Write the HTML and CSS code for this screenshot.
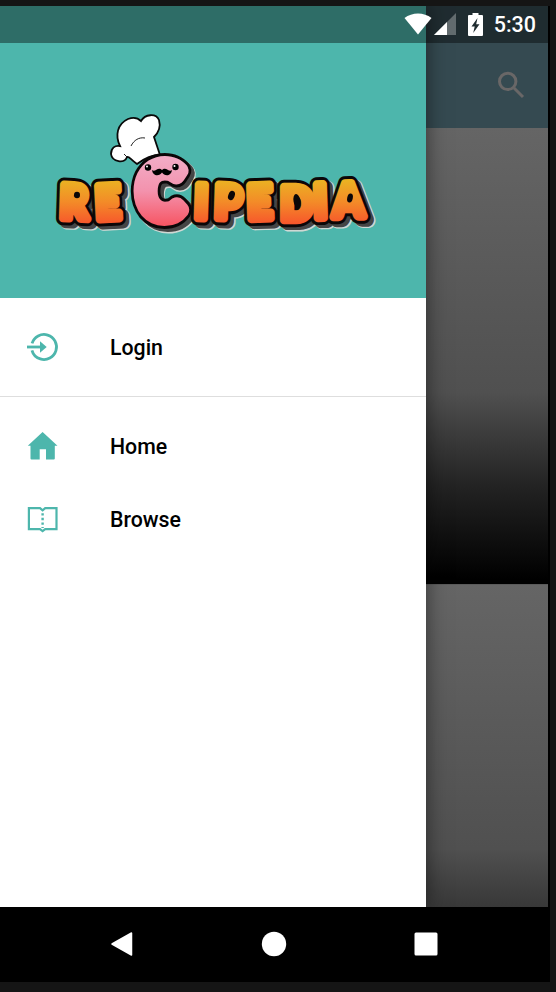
FILE: index.html
```html
<!DOCTYPE html>
<html lang="en">
<head>
<meta charset="utf-8">
<title>Recipedia</title>
<link rel="stylesheet" href="styles.css">
</head>
<body>
<div class="device">
  <div class="screen">
    <main class="app">
      <header class="appbar">
        <svg class="search" viewBox="0 0 28 28"><circle cx="10.7" cy="10.4" r="8.2"/><path d="M17 17l9 9"/></svg>
      </header>
      <div class="card card-first"></div>
      <div class="card card-second"></div>
    </main>
    <aside class="drawer">
      <div class="drawer-header">
        <svg class="logo" viewBox="40 105 350 140" role="img" aria-label="Recipedia">
          <defs>
            <linearGradient id="orange" gradientUnits="userSpaceOnUse" x1="0" y1="178" x2="0" y2="226">
              <stop offset="0" stop-color="#eab622"/><stop offset=".5" stop-color="#f38b28"/><stop offset="1" stop-color="#f7512c"/>
            </linearGradient>
            <linearGradient id="pink" gradientUnits="userSpaceOnUse" x1="0" y1="154" x2="0" y2="228">
              <stop offset="0" stop-color="#f2afc9"/><stop offset=".5" stop-color="#f392ad"/><stop offset="1" stop-color="#f7515e"/>
            </linearGradient>
            <g id="word" class="word" transform="scale(.93 1)">
              <text x="64 103.500" y="218 219.500" rotate="2 -3">RE</text>
              <text x="209 230.500 266.500 301.500 338 358.500" y="218 218 219 220 218 217" rotate="2 2 -2 0 -2 -1">IPEDIA</text>
            </g>
            <g id="initial" class="initial"><text x="138" y="218" textLength="45" lengthAdjust="spacingAndGlyphs">C</text></g>
          </defs>
          <use href="#word" class="halo" x="4.5" y="4"/>
          <use href="#initial" class="halo big" x="4" y="3.5"/>
          <use href="#word" class="shadow" x="3.5" y="3.2"/>
          <use href="#initial" class="shadow big" x="3.5" y="3"/>
          <use href="#word" class="outline"/>
          <use href="#word" class="orange"/>
          <g class="counters">
            <ellipse cx="77" cy="195" rx="3" ry="3.300"/>
            <ellipse cx="231.500" cy="195.500" rx="3.200" ry="4.800" transform="rotate(20 231.500 195.500)"/>
            <ellipse cx="297" cy="201" rx="3.500" ry="7" transform="rotate(-10 297 201)"/>
            <ellipse cx="350" cy="198" rx="2.800" ry="4.500" transform="rotate(12 350 198)"/>
          </g>
          <path class="hat" d="M137 164C130 159 129 156 127 157C125 164 112 162 111 154C111 148 115 145 120 146C115 136 117 124 128 119C133 117 138 118 141 121C145 114 156 113 159 120C161 127 158 133 154 137L160 155C151 155 145 158 137 164Z"/>
          <path class="crease" d="M131 146C134 140 139 137 145 138M127 157L124 154"/>
          <use href="#initial" class="outline big"/>
          <use href="#initial" class="pink"/>
          <circle cx="148" cy="167.5" r="3.2"/><circle cx="175.5" cy="167" r="3.2"/>
          <circle class="shine" cx="147" cy="166.5" r="1"/><circle class="shine" cx="174.5" cy="166" r="1"/>
          <path d="M162 170C158 166 155 173 152 170C153 177 160 176 162 172.500C164 176 171 177 172 170C169 173 166 166 162 170Z"/>
        </svg>
      </div>
      <nav class="menu">
        <div class="item">
          <svg class="icon" viewBox="0 0 32 32"><circle class="line" cx="17" cy="16" r="12.5" stroke-dasharray="71 7.54" transform="rotate(197 17 16)"/><path class="line" d="M0 16H14"/><path d="M13 10.2L19.7 16L13 21.8Z"/></svg>
          <span>Login</span>
        </div>
      </nav>
      <nav class="menu divided">
        <div class="item">
          <svg class="icon" viewBox="0 0 32 32"><path d="M15.6 2L30.5 15.7H27.8V28.5Q27.8 29.5 26.8 29.5H19V19.2H12.7V29.5H4.5Q3.5 29.5 3.5 28.5V15.7H.8Z"/></svg>
          <span>Home</span>
        </div>
        <div class="item">
          <svg class="icon" viewBox="0 0 32 32"><path class="line thin" d="M1.9 5.1H13L15.6 7.3L18.2 5.1H29.5V26.2H18.2L15.6 28.2L13 26.2H1.9Z"/><path class="line dots" d="M15.6 10.2V25"/></svg>
          <span>Browse</span>
        </div>
      </nav>
    </aside>
    <div class="statusbar">
      <svg class="wifi" viewBox="0 0 28 22"><path d="M.5 5C8 -1 20 -1 27.500 5L14 21.500Z"/></svg>
      <svg class="signal" viewBox="0 0 22 22"><path class="dim" d="M22 0V22H0Z"/><path d="M13 9V22H0Z"/></svg>
      <svg class="battery" viewBox="0 0 15 23"><path fill-rule="evenodd" d="M4.500 0H10.500V2H14Q15 2 15 3V22Q15 23 14 23H1Q0 23 0 22V3Q0 2 1 2H4.500ZM9.500 5L3.500 13.500H6.700L5.200 20L11.500 11.300H8.200Z"/></svg>
      <span class="clock">5:30</span>
    </div>
  </div>
  <div class="navbar">
    <svg viewBox="0 0 26 26"><path class="round" d="M3 13L22.500 2V24Z"/></svg>
    <svg viewBox="0 0 26 26"><circle cx="13" cy="13" r="12.200"/></svg>
    <svg viewBox="0 0 26 26"><rect x="1.500" y="1.500" width="23" height="23" rx="1.500"/></svg>
  </div>
</div>
</body>
</html>
```
FILE: styles.css
```css
* { box-sizing: border-box; }
body {
  margin: 0;
  height: 992px;
  padding-top: 6px;
  background: #151515;
  font-family: Roboto, "Liberation Sans", sans-serif;
  overflow: hidden;
}
svg { display: block; flex: none; }
.device { width: 550px; height: 976px; background: #000; }
.screen { position: relative; width: 548px; height: 901px; overflow: hidden; }
.app { display: flex; flex-direction: column; height: 100%; }
.appbar {
  flex: none;
  display: flex;
  justify-content: flex-end;
  height: 122px;
  padding: 65px 23px 0 0;
  background: #354a51;
}
.search { width: 28px; height: 28px; fill: none; stroke: #696767; stroke-width: 3; }
.card-first { height: 456px; background: linear-gradient(#656565 0, #505050 58%, #222 79%, #000 99%); }
.card-second { flex: 1; border-top: 1px solid #5a5a5a; background: linear-gradient(#656565, #505050 82%, #383838); }
.drawer {
  position: absolute;
  top: 0;
  left: 0;
  width: 426px;
  height: 100%;
  background: #fff;
  box-shadow: 0 0 20px rgba(0, 0, 0, .5);
}
.drawer-header { height: 292px; padding: 99px 0 0 40px; background: #4db6ac; }
.logo { width: 350px; height: 140px; }
.word { font: 900 46px Lato, sans-serif; }
.initial { font: 900 75px Lato, sans-serif; }
.halo { fill: #cfd8d4; stroke: #cfd8d4; stroke-width: 15; stroke-linejoin: round; }
.shadow { fill: #454545; stroke: #454545; stroke-width: 14; stroke-linejoin: round; }
.outline { fill: #0b0708; stroke: #0b0708; stroke-width: 14.500; stroke-linejoin: round; }
.big { stroke-width: 21; }
.halo.big { stroke-width: 22; }
.orange { fill: url(#orange); stroke: url(#orange); stroke-width: 8.500; stroke-linejoin: round; }
.pink { fill: url(#pink); stroke: url(#pink); stroke-width: 15; stroke-linejoin: round; }
.counters { fill: #0b0708; }
.hat { fill: #fff; stroke: #090909; stroke-width: 1.800; }
.crease { fill: none; stroke: #222; stroke-width: 1; }
.shine { fill: #fff; }
.menu { padding: 13px 0 12px; }
.divided { border-top: 1px solid #dedede; }
.item {
  display: flex;
  align-items: center;
  gap: 51px;
  height: 73px;
  padding-left: 27px;
  font-size: 21.300px;
  font-weight: 500;
  color: #000;
}
.icon { width: 32px; height: 32px; margin-bottom: 2px; fill: #4db6ac; }
.line { fill: none; stroke: #4db6ac; stroke-width: 2.800; }
.thin { stroke-width: 2.200; }
.dots { stroke-width: 2.400; stroke-dasharray: 2.400 2.200; }
.statusbar {
  position: absolute;
  top: 0;
  left: 0;
  display: flex;
  align-items: center;
  justify-content: flex-end;
  width: 100%;
  height: 36.500px;
  padding-right: 12px;
  background: rgba(0, 0, 0, .4);
  color: #fff;
  fill: #fff;
}
.wifi { width: 28px; height: 22px; margin-right: 2px; }
.signal { width: 22px; height: 22px; margin-right: 12px; }
.battery { width: 15px; height: 23px; margin-right: 11px; }
.dim { opacity: .3; }
.clock { padding-top: 2px; font-size: 21.500px; font-weight: 500; line-height: 36px; }
.navbar {
  display: flex;
  align-items: center;
  justify-content: space-between;
  height: 73px;
  padding: 0 111px 0 109px;
  fill: #fff;
}
.navbar svg { width: 26px; height: 26px; }
.round { stroke: #fff; stroke-width: 1.500; stroke-linejoin: round; }
```
